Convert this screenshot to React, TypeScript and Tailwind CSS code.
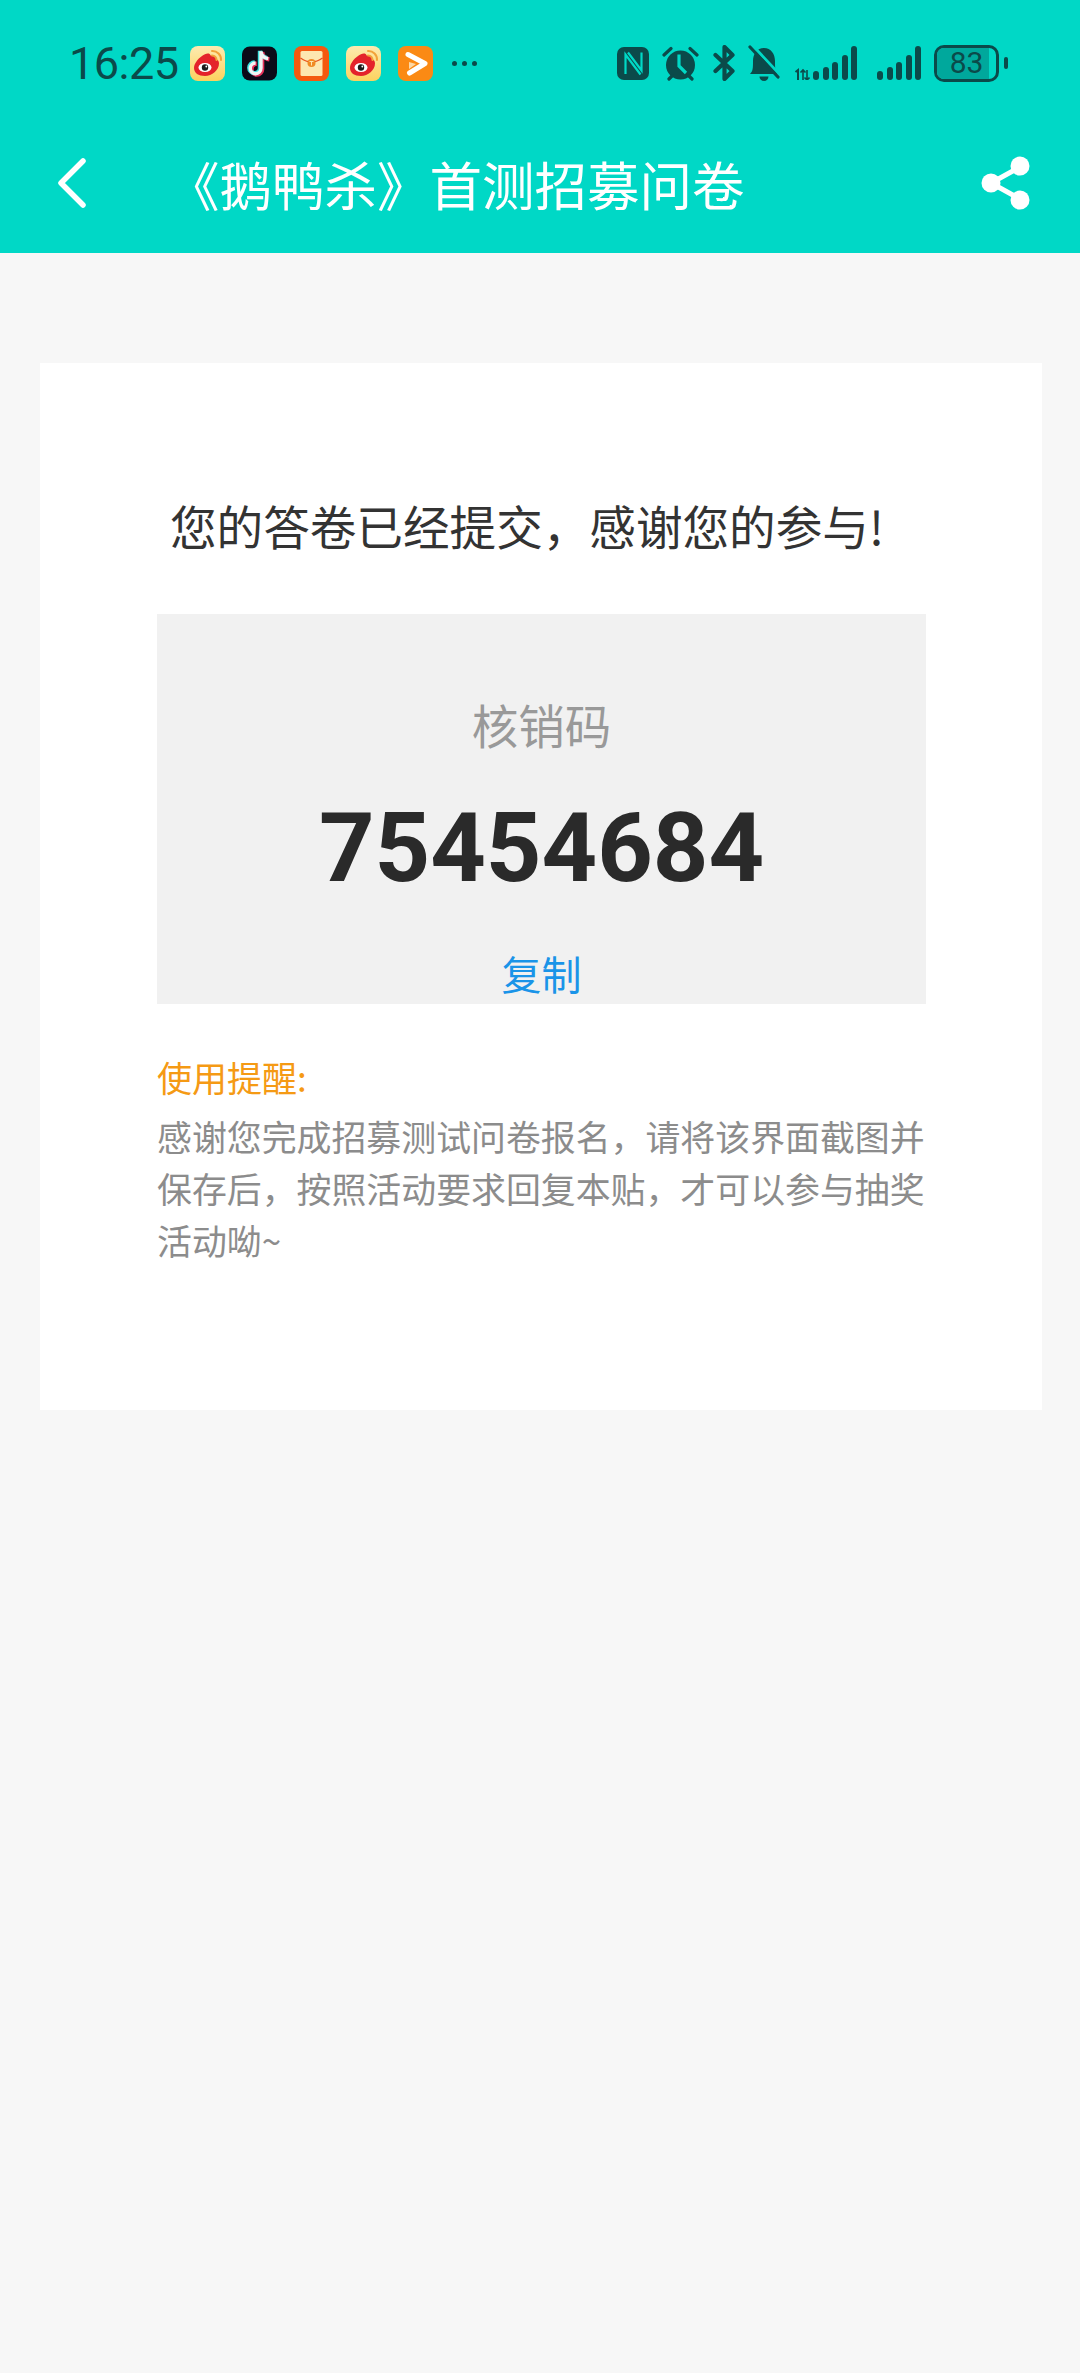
import React from 'react'

const ink = '#0b4a4a'
const teal = '#00d8c6'

function Weibo({ id }: { id: string }) {
  return (
    <svg width="35" height="35" viewBox="0 0 35 35">
      <defs>
        <linearGradient id={id} x1="0" y1="0" x2="0" y2="1">
          <stop offset="0" stopColor="#fdebb0" />
          <stop offset="1" stopColor="#fcd25e" />
        </linearGradient>
      </defs>
      <rect width="35" height="35" rx="8" fill={`url(#${id})`} />
      <path d="M12 10c3.500-3 8-3.500 8.500-0.500 3-1 6 0.500 5.500 3.500 2 0.800 3 2.500 3 4.500 0 6.500-7 12.500-14 12.500-6.500 0-11-3-11-8 0-4 3.500-9 8-12z" fill="#e4232b" />
      <ellipse cx="15" cy="21.500" rx="6.500" ry="4.500" fill="#fff" />
      <circle cx="15" cy="21.500" r="3.200" fill="#1c1c1c" />
      <circle cx="16.300" cy="20.500" r="0.900" fill="#fff" />
      <path d="M22 5a8.500 8.500 0 0 1 9 9" stroke="#f2a33a" strokeWidth="2" fill="none" strokeLinecap="round" />
      <path d="M22 9.500a4.500 4.500 0 0 1 4.500 4.500" stroke="#f2a33a" strokeWidth="2" fill="none" strokeLinecap="round" />
    </svg>
  )
}

function Douyin() {
  const note = 'M19.500 5v17.500a5.500 5.500 0 1 1-5.500-5.500M19.500 5c0.500 4 3.500 7 7.500 7.500'
  return (
    <svg width="35" height="35" viewBox="0 0 36 35">
      <rect width="36" height="35" rx="8" fill="#0b0b18" />
      <path d={note} transform="translate(1.200 0.800)" stroke="#e8305a" strokeWidth="4.500" fill="none" />
      <path d={note} transform="translate(-1 -0.600)" stroke="#3fe0e0" strokeWidth="4.500" fill="none" />
      <path d={note} stroke="#f4f4f4" strokeWidth="3.500" fill="none" />
    </svg>
  )
}

function RedPacket() {
  return (
    <svg width="35" height="35" viewBox="0 0 35 35">
      <rect width="35" height="35" rx="8" fill="#f4590f" />
      <rect x="6.500" y="5" width="22" height="25" rx="1.500" fill="#fde6b0" />
      <path d="M6.500 12q11 8 22 0" stroke="#e8501a" strokeWidth="1.400" fill="none" />
      <circle cx="17.500" cy="17" r="4" fill="#f08a24" />
      <path d="M15.500 15.500h4M17.500 15.500v4" stroke="#fde6b0" strokeWidth="1" />
    </svg>
  )
}

function PlayApp() {
  return (
    <svg width="35" height="35" viewBox="0 0 35 35">
      <rect width="35" height="35" rx="8" fill="#fb8a14" />
      <path d="M10 8.500l17 9-15.500 9.500" stroke="#fff" strokeWidth="5" fill="none" strokeLinejoin="round" strokeLinecap="round" />
      <path d="M11 16l7 2-7 5z" fill="#fcd9a8" />
    </svg>
  )
}

function SignalBars() {
  const bars = [9, 13, 18, 25, 34]
  return (
    <div className="flex items-end gap-[3.500px]">
      {bars.map((h, i) => (
        <div key={i} className="w-[6px] rounded-full bg-[#0b4a4a]" style={{ height: h }} />
      ))}
    </div>
  )
}

function StatusBar() {
  return (
    <div className="flex h-[113px] items-center pt-[13px] pl-[69px] text-[#0b4a4a]">
      <span className="mr-[12px] w-[109px] font-['Roboto',sans-serif] text-[45px] leading-none tracking-[-0.500px]">16:25</span>
      <div className="flex items-center gap-[17px]">
        <Weibo id="wb1" />
        <Douyin />
        <RedPacket />
        <Weibo id="wb2" />
        <PlayApp />
      </div>
      <div className="ml-[19px] flex gap-[5px]">
        <span className="size-[5px] rounded-full bg-[#0b4a4a]" />
        <span className="size-[5px] rounded-full bg-[#0b4a4a]" />
        <span className="size-[5px] rounded-full bg-[#0b4a4a]" />
      </div>

      {/* nfc */}
      <svg className="ml-[140px]" width="32" height="33" viewBox="0 0 32 33">
        <rect width="32" height="33" rx="7" fill={ink} />
        <path d="M8.500 27V7.500l15 20M11 5.500l13.500 18V5.500" stroke={teal} strokeWidth="2.200" fill="none" />
      </svg>
      {/* alarm */}
      <svg className="ml-[13px]" width="37" height="37" viewBox="0 0 37 37">
        <circle cx="18.500" cy="20" r="14.500" fill={ink} />
        <path d="M17 9.500V21l7 7" stroke={teal} strokeWidth="3.200" fill="none" />
        <path d="M2 10l7-6.500M35 10l-7-6.500M7 34l3-3M30 34l-3-3" stroke={ink} strokeWidth="3.200" strokeLinecap="round" />
      </svg>
      {/* bluetooth */}
      <svg className="ml-[14px]" width="22" height="36" viewBox="0 0 22 36">
        <path d="M2.500 10l17 16-8 8V2l8 8-17 16" stroke={ink} strokeWidth="4.200" fill="none" strokeLinejoin="round" strokeLinecap="round" />
      </svg>
      {/* muted bell */}
      <svg className="ml-[13px]" width="32" height="36" viewBox="0 0 32 36">
        <path d="M2 29c3-3 3-6 3-13 0-7 4-13 11-13s11 6 11 13c0 7 0 10 3 13z" fill={ink} />
        <path d="M11.500 31.500h9a4.500 4.500 0 0 1-9 0z" fill={ink} />
        <path d="M5 1l27 29" stroke={teal} strokeWidth="3" />
        <path d="M2 2l28 30" stroke={ink} strokeWidth="3.200" strokeLinecap="round" />
      </svg>

      {/* sim 1 with data arrows */}
      <svg className="ml-[14px] self-center" width="16" height="34" viewBox="0 0 16 34">
        <path d="M1.500 26l2.500-2v10" stroke={ink} strokeWidth="2" fill="none" />
        <path d="M9 34V24M6.500 26.500L9 24l2.500 2.500M13 24v10M10.500 31.500L13 34l2.500-2.500" stroke={ink} strokeWidth="1.600" fill="none" />
      </svg>
      <div className="ml-[3px]">
        <SignalBars />
      </div>
      <div className="ml-[20px]">
        <SignalBars />
      </div>

      <div className="ml-[13px] flex items-center">
        <div className="relative flex h-[37px] w-[65px] items-center justify-center overflow-hidden rounded-[10px] border-[3px] border-[#0b4a4a]">
          <div className="absolute inset-y-0 left-0 w-[88%] bg-[#00a89c]" />
          <span className="relative font-['Roboto',sans-serif] text-[30px] leading-none">83</span>
        </div>
        <div className="ml-[5px] h-[12px] w-[4px] rounded-full bg-[#0b4a4a]" />
      </div>
    </div>
  )
}

function NavBar() {
  return (
    <div className="flex h-[140px] items-center pl-[57px] text-white">
      <svg width="30" height="50" viewBox="0 0 30 50">
        <path d="M26 3L4 25l22 22" stroke="#fff" strokeWidth="5.500" fill="none" strokeLinecap="round" strokeLinejoin="round" />
      </svg>
      <h1 className="ml-[80px] w-[814px] text-[52.500px] leading-none font-normal">《鹅鸭杀》首测招募问卷</h1>
      <svg className="ml-[-1px]" width="52" height="54" viewBox="0 0 52 54">
        <path d="M40 11L11 27l29 16" stroke="#fff" strokeWidth="5" fill="none" />
        <circle cx="40" cy="10" r="9.500" fill="#fff" />
        <circle cx="11" cy="27" r="9.500" fill="#fff" />
        <circle cx="40" cy="44" r="9.500" fill="#fff" />
      </svg>
    </div>
  )
}

export default function App() {
  return (
    <div className="min-h-[2373px] bg-[#f7f7f7] font-['Noto_Sans_CJK_SC','Noto_Sans',sans-serif]">
      <div className="bg-[#00d8c6]">
        <StatusBar />
        <NavBar />
      </div>

      <main className="px-[40px] pt-[110px]">
        <div className="h-[1047px] w-[1002px] bg-white pt-[128px] pr-[116px] pl-[117px]">
          <p className="pl-[13px] text-[46.600px] leading-[68px] whitespace-nowrap text-[#333333]">您的答卷已经提交，感谢您的参与!</p>

          <div className="mt-[55px] flex h-[390px] flex-col items-center bg-[#f1f1f1]">
            <div className="mt-[80px] text-[46.500px] leading-[60px] text-[#999999]">核销码</div>
            <div className="mt-[39px] font-['Roboto',sans-serif] text-[97px] leading-[110px] font-bold text-[#2a2a2a]">75454684</div>
            <button className="mt-[40px] text-[40px] leading-[60px] text-[#1a94e8]">复制</button>
          </div>

          <div className="mt-[43px] text-[35px] leading-[60px] text-[#f59a14]">使用提醒:</div>
          <p className="mt-[3px] text-[34.900px] leading-[52px] text-[#8c8c8c]">
            感谢您完成招募测试问卷报名，请将该界面截图并保存后，按照活动要求回复本贴，才可以参与抽奖活动呦~
          </p>
        </div>
      </main>
    </div>
  )
}
